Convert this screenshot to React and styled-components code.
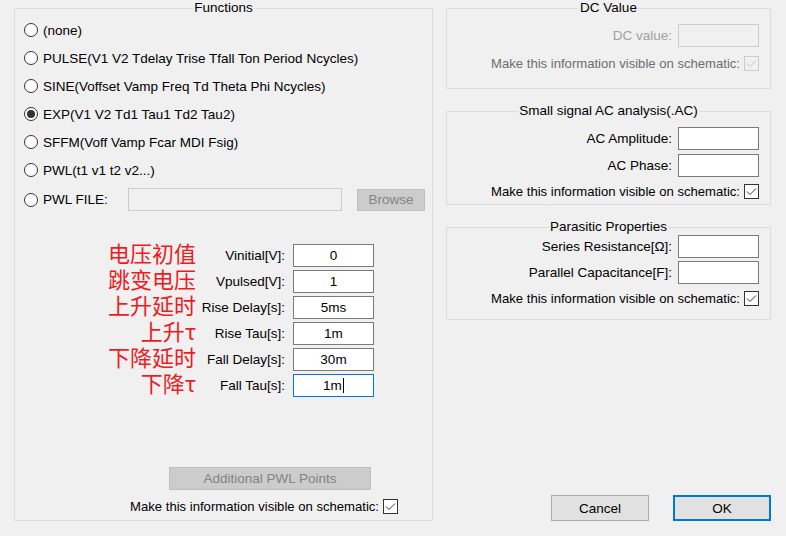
import React from 'react';
import styled, {createGlobalStyle} from 'styled-components';

const GlobalStyle = createGlobalStyle`
  html, body {
    margin: 0;
    background: #f0f0f0;
  }
  body {
    font-family: 'Liberation Sans', Arial, sans-serif;
    font-size: 13.5px;
    color: #000;
  }
`;

const Window = styled.div`
  width: 786px;
  height: 536px;
  box-sizing: border-box;
  padding: 0 15px 0 14px;
  display: flex;
  gap: 13px;
  background: #f0f0f0;
`;

const Group = styled.fieldset`
  margin: 0;
  margin-top: ${p => p.$top || 0}px;
  padding: 0;
  min-width: 0;
  box-sizing: border-box;
  width: ${p => p.$width}px;
  height: ${p => p.$height}px;
  border: 1px solid #dcdcdc;
  display: flex;
  flex-direction: column;
  legend {
    margin: 0 auto;
    padding: 0 1px;
    line-height: 16px;
    height: 16px;
    font-size: 13.5px;
  }
`;

const RightColumn = styled.div`
  width: 325px;
  display: flex;
  flex-direction: column;
  padding-bottom: 15px;
  box-sizing: border-box;
`;

const RadioList = styled.div`
  display: flex;
  flex-direction: column;
  padding-left: 9px;
`;

const RadioRow = styled.div`
  height: ${p => p.$h || 28}px;
  display: flex;
  align-items: center;
  gap: 5px;
  white-space: nowrap;
`;

const Radio = styled.span`
  width: 14px;
  height: 14px;
  box-sizing: border-box;
  border: 1px solid #333;
  border-radius: 50%;
  background: #fff;
  display: flex;
  align-items: center;
  justify-content: center;
  flex: none;
  &::after {
    content: '';
    display: ${p => (p.$on ? 'block' : 'none')};
    width: 8px;
    height: 8px;
    border-radius: 50%;
    background: #333;
  }
`;

const FileLabel = styled.span`
  width: 80px;
`;

const TextBox = styled.div`
  width: ${p => p.$w || 81}px;
  height: 23px;
  box-sizing: border-box;
  border: 1px solid ${p => (p.$focus ? '#0078d7' : p.$disabled ? '#cccccc' : '#7a7a7a')};
  background: ${p => (p.$disabled ? '#f0f0f0' : '#fff')};
  display: flex;
  align-items: center;
  justify-content: center;
  flex: none;
`;

const Caret = styled.span`
  width: 1px;
  height: 15px;
  background: #000;
  margin-left: 1px;
`;

const Button = styled.div`
  width: ${p => p.$w}px;
  height: ${p => p.$h || 23}px;
  box-sizing: border-box;
  display: flex;
  align-items: center;
  justify-content: center;
  background: ${p => (p.$disabled ? '#cccccc' : '#e1e1e1')};
  color: ${p => (p.$disabled ? '#838383' : '#000')};
  border: ${p => (p.$default ? '2px solid #0078d7' : p.$disabled ? '1px solid #bfbfbf' : '1px solid #adadad')};
  margin-left: ${p => p.$left || 0}px;
  flex: none;
`;

const ParamGrid = styled.div`
  margin-top: 29px;
  display: grid;
  grid-template-columns: 181px 97px 81px;
  grid-auto-rows: 23px;
  row-gap: 3px;
`;

const Note = styled.div`
  font-family: 'Noto Sans CJK SC', sans-serif;
  font-size: 22px;
  line-height: 23px;
  height: 23px;
  margin-top: -3px;
  color: #ed1c24;
  text-align: right;
  white-space: nowrap;
`;

const ParamLabel = styled.div`
  text-align: right;
  padding-right: 8px;
  line-height: 23px;
  white-space: nowrap;
`;

const Footer = styled.div`
  margin-top: auto;
  padding-bottom: 6px;
  display: flex;
  flex-direction: column;
  gap: 9px;
`;

const FieldRow = styled.div`
  display: flex;
  justify-content: flex-end;
  align-items: center;
  gap: 6px;
  padding-right: ${p => p.$pr || 11}px;
  margin-top: ${p => p.$mt || 0}px;
  color: ${p => p.$color || '#000'};
  white-space: nowrap;
`;

const CheckText = styled.span`
  font-size: 13.1px;
  margin-right: -2px;
`;

const Box = styled.span`
  width: 15px;
  height: 15px;
  box-sizing: border-box;
  border: 1px solid ${p => (p.$disabled ? '#cccccc' : '#333')};
  background: ${p => (p.$disabled ? '#f0f0f0' : '#fff')};
  display: flex;
  flex: none;
  svg {
    display: block;
  }
`;

const ButtonBar = styled.div`
  margin-top: auto;
  display: flex;
  justify-content: flex-end;
  gap: 24px;
`;

function CheckBox({disabled}) {
  return (
    <Box $disabled={disabled}>
      <svg width="13" height="13" viewBox="0 0 13 13">
        <polyline points="2,6.5 5,9.5 11,3.5" fill="none" stroke={disabled ? '#c4c4c4' : '#333'} strokeWidth="1" />
      </svg>
    </Box>
  );
}

function VisibleRow({disabled, mt, pr}) {
  return (
    <FieldRow $mt={mt} $pr={pr} $color={disabled ? '#6d6d6d' : '#000'}>
      <CheckText>Make this information visible on schematic:</CheckText>
      <CheckBox disabled={disabled} />
    </FieldRow>
  );
}

const functions = [
  '(none)',
  'PULSE(V1 V2 Tdelay Trise Tfall Ton Period Ncycles)',
  'SINE(Voffset Vamp Freq Td Theta Phi Ncycles)',
  'EXP(V1 V2 Td1 Tau1 Td2 Tau2)',
  'SFFM(Voff Vamp Fcar MDI Fsig)',
  'PWL(t1 v1 t2 v2...)',
];

const params = [
  ['电压初值', 'Vinitial[V]:', '0'],
  ['跳变电压', 'Vpulsed[V]:', '1'],
  ['上升延时', 'Rise Delay[s]:', '5ms'],
  ['上升τ', 'Rise Tau[s]:', '1m'],
  ['下降延时', 'Fall Delay[s]:', '30m'],
  ['下降τ', 'Fall Tau[s]:', '1m', true],
];

export default function App() {
  return (
    <>
      <GlobalStyle />
      <Window>
        <Group $width={420} $height={521}>
          <legend>Functions</legend>
          <RadioList>
            {functions.map((f, i) => (
              <RadioRow key={f}>
                <Radio $on={i === 3} />
                {f}
              </RadioRow>
            ))}
            <RadioRow $h={31}>
              <Radio />
              <FileLabel>PWL FILE:</FileLabel>
              <TextBox $w={214} $disabled />
              <Button $w={68} $h={22} $left={10} $disabled>Browse</Button>
            </RadioRow>
          </RadioList>

          <ParamGrid>
            {params.map(([note, label, value, focus]) => (
              <React.Fragment key={label}>
                <Note>{note}</Note>
                <ParamLabel>{label}</ParamLabel>
                <TextBox $focus={focus}>
                  {value}
                  {focus && <Caret />}
                </TextBox>
              </React.Fragment>
            ))}
          </ParamGrid>

          <Footer>
            <Button $w={202} $left={154} $disabled>Additional PWL Points</Button>
            <VisibleRow pr={34} />
          </Footer>
        </Group>

        <RightColumn>
          <Group $width={325} $height={89}>
            <legend>DC Value</legend>
            <FieldRow $mt={8} $color="#a0a0a0">
              DC value:
              <TextBox $disabled />
            </FieldRow>
            <VisibleRow mt={9} disabled />
          </Group>

          <Group $width={325} $height={102} $top={14}>
            <legend>Small signal AC analysis(.AC)</legend>
            <FieldRow $mt={8}>
              AC Amplitude:
              <TextBox />
            </FieldRow>
            <FieldRow $mt={4}>
              AC Phase:
              <TextBox />
            </FieldRow>
            <VisibleRow mt={7} />
          </Group>

          <Group $width={325} $height={101} $top={14}>
            <legend>Parasitic Properties</legend>
            <FieldRow>
              Series Resistance[Ω]:
              <TextBox />
            </FieldRow>
            <FieldRow $mt={3}>
              Parallel Capacitance[F]:
              <TextBox />
            </FieldRow>
            <VisibleRow mt={7} />
          </Group>

          <ButtonBar>
            <Button $w={98} $h={26}>Cancel</Button>
            <Button $w={98} $h={26} $default>OK</Button>
          </ButtonBar>
        </RightColumn>
      </Window>
    </>
  );
}
